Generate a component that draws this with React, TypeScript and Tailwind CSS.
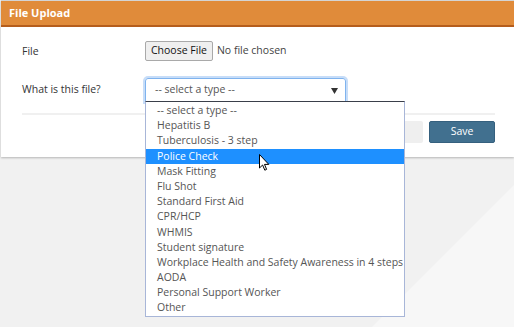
import React from "react";

const options = [
  "-- select a type --",
  "Hepatitis B",
  "Tuberculosis - 3 step",
  "Police Check",
  "Mask Fitting",
  "Flu Shot",
  "Standard First Aid",
  "CPR/HCP",
  "WHMIS",
  "Student signature",
  "Workplace Health and Safety Awareness in 4 steps",
  "AODA",
  "Personal Support Worker",
  "Other",
];

export default function App() {
  return (
    <div
      className="relative w-[514px] h-[327px] overflow-hidden bg-[#f1f1f1] text-[10.5px] text-[#333]"
      style={{ fontFamily: '"Open Sans", sans-serif' }}
    >
      <svg className="absolute inset-0" width="514" height="327">
        <polygon points="514,185 514,327 372,327" fill="#f7f7f7" />
      </svg>

      <div className="relative ml-[1px] bg-white border-t border-[#d4d4d4] shadow-[0_1px_2px_rgba(0,0,0,0.25)]">
        <div className="h-[26px] bg-[#e08b3a] border-b-2 border-[#b55d1c] flex items-center pl-[8px]">
          <span className="text-white font-bold text-[11px]">File Upload</span>
        </div>
        <div className="pt-[14px] pb-[14px] pl-[21px] pr-[19px]">
          <div className="flex items-center h-[20px]">
            <div className="w-[123px] pt-[1px]">File</div>
            <div className="flex items-center">
              <button className="h-[20px] px-[5px] bg-[#efefef] border border-[#a9a9a9] rounded-[2px] text-[#111] text-[10.5px]">
                Choose File
              </button>
              <span className="ml-[4px] text-[#444]">No file chosen</span>
            </div>
          </div>
          <div className="flex items-center h-[24px] mt-[17px]">
            <div className="w-[123px]">What is this file?</div>
            <div className="relative w-[201px] h-[24px] border border-[#7fb3ee] rounded-t-[3px] shadow-[0_0_0_2px_rgba(130,180,240,0.45)] flex items-center pl-[9px] text-[#555]">
              -- select a type --
              <svg className="absolute right-[7px] top-[9px]" width="7" height="6" viewBox="0 0 7 6">
                <polygon points="0,0 7,0 3.5,6" fill="#333" />
              </svg>
            </div>
          </div>
          <div className="mt-[11px] h-[2px] bg-[#f0f0f0]" />
          <div className="mt-[6px] flex justify-end gap-[6px]">
            <button className="w-[72px] h-[22px] bg-[#efefef] text-[#555] rounded-[2px] pl-[4px] text-left">
              Cancel
            </button>
            <button className="w-[66px] h-[22px] bg-[#41708f] text-white rounded-[2px] border border-[#35607e]">
              Save
            </button>
          </div>
        </div>
      </div>

      <div className="absolute left-[145px] top-[101px] w-[260px] pt-[1px] bg-white border border-[#a8b6d8] border-t-[#3a3f4a]">
        {options.map((o, i) => (
          <div
            key={o}
            className={
              "h-[15.2px] leading-[15.2px] pl-[11px] whitespace-nowrap " +
              (i === 3 ? "bg-[#1e90ff] text-white" : "text-[#555]")
            }
          >
            {o}
          </div>
        ))}
      </div>

      <svg className="absolute left-[259px] top-[154px]" width="13" height="18" viewBox="0 0 13 18">
        <path
          d="M0.5 0.5 L0.5 14 L3.6 11 L5.8 16.2 L7.6 15.4 L5.5 10.4 L9.8 10.4 Z"
          fill="#fff"
          stroke="#000"
          strokeWidth="1"
          strokeLinejoin="round"
        />
      </svg>
    </div>
  );
}
